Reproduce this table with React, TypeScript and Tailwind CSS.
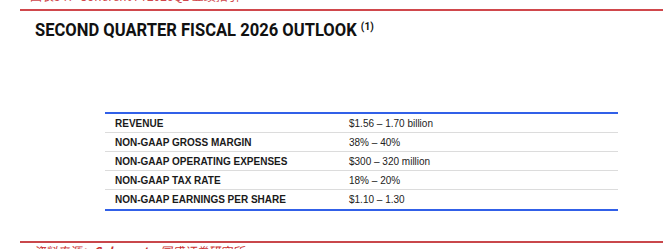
import React from "react";

const rows: [string, string][] = [
  ["REVENUE", "$1.56 – 1.70 billion"],
  ["NON-GAAP GROSS MARGIN", "38% – 40%"],
  ["NON-GAAP OPERATING EXPENSES", "$300 – 320 million"],
  ["NON-GAAP TAX RATE", "18% – 20%"],
  ["NON-GAAP EARNINGS PER SHARE", "$1.10 – 1.30"],
];

export default function App() {
  return (
    <div className="w-[669px] h-[249px] overflow-hidden bg-white">
      <div className="ml-[20px] mr-[6px] h-[11px] border-b-[2px] border-[#d0474c] overflow-hidden">
        <div
          className="mt-[-10px] ml-[10px] text-[12px] leading-[12px] text-[#d0474c] whitespace-nowrap"
          style={{ fontFamily: '"Noto Sans CJK SC", sans-serif' }}
        >
          图表54：Coherent FY2026Q2 业绩指引
        </div>
      </div>
      <div
        className="ml-[35px] mt-[6px] h-[20px] text-[18px] leading-[20px] font-bold text-[#111] whitespace-nowrap origin-left scale-x-[0.92]"
        style={{ fontFamily: 'Roboto, sans-serif' }}
      >
        SECOND QUARTER FISCAL 2026 OUTLOOK{" "}
        <span className="text-[11px] align-[6px]">(1)</span>
      </div>
      <div
        className="ml-[105px] mt-[75px] w-[513px] border-t-[2px] border-b-[2px] border-[#3160e8]"
        style={{ fontFamily: '"Liberation Sans", Arial, sans-serif' }}
      >
        {rows.map(([k, v], i) => (
          <div
            key={k}
            className={`flex items-center h-[19px] ${i < rows.length - 1 ? "border-b border-[#dcdcdc]" : ""}`}
          >
            <div className="w-[244px] pl-[10px] text-[10px] font-bold text-[#1a1a1a]">{k}</div>
            <div className="text-[10px] text-[#222]">{v}</div>
          </div>
        ))}
      </div>
      <div className="ml-[20px] mr-[6px] mt-[30px] border-t-[2px] border-[#c9474b]">
        <div
          className="ml-[13px] mt-[1px] text-[12px] leading-[14px] italic text-[#c9302f] whitespace-nowrap"
          style={{ fontFamily: '"Noto Sans CJK SC", sans-serif' }}
        >
          资料来源：<span className="font-bold">Coherent</span>，国盛证券研究所
        </div>
      </div>
    </div>
  );
}
